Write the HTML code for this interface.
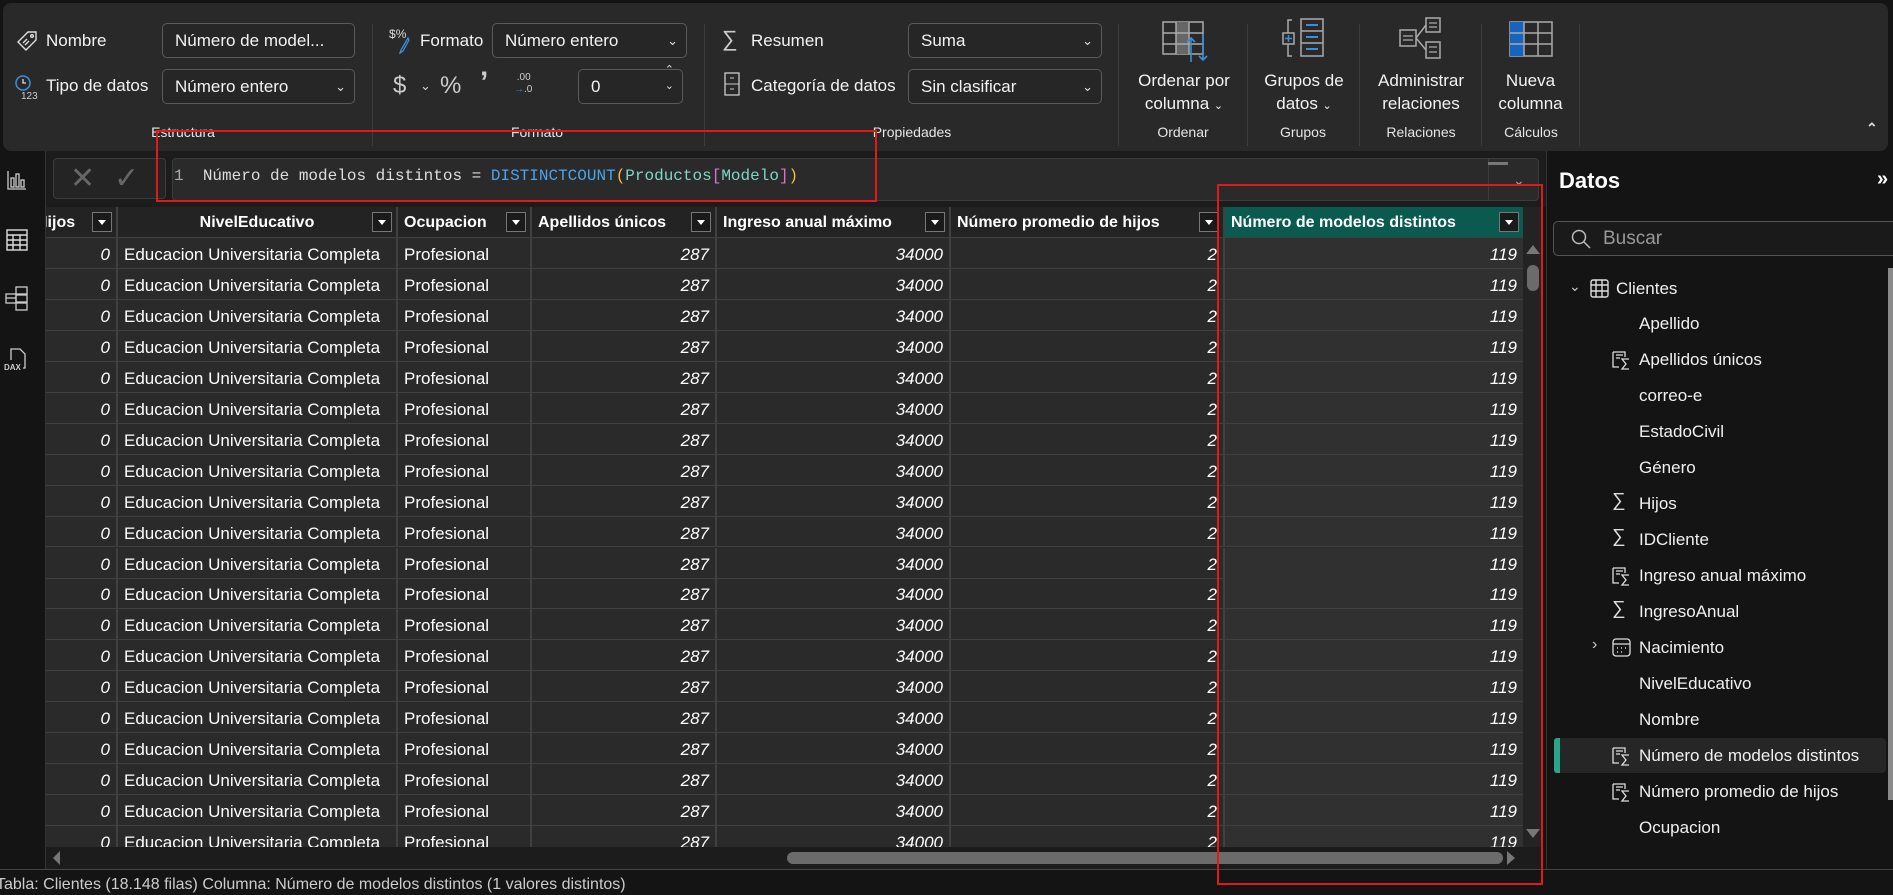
<!DOCTYPE html>
<html><head><meta charset="utf-8"><style>
*{margin:0;padding:0;box-sizing:border-box}
body{width:1893px;height:895px;background:#141414;font-family:"Liberation Sans",sans-serif;color:#fff;position:relative;overflow:hidden}
.a{position:absolute;white-space:nowrap}
.rib{position:absolute;left:3px;top:3px;width:1885px;height:148px;background:#292929;border-radius:8px}
.t17{font-size:17px;color:#f2f2f2}
.lbl{font-size:14px;color:#e6e6e6;text-align:center}
.box{position:absolute;border:1px solid #5a5a5a;border-radius:5px;background:#262626;font-size:17px;color:#f2f2f2;padding-left:12px;line-height:33px}
.chev{position:absolute;right:8px;top:0;font-size:13px;color:#ddd}
.sep{position:absolute;top:24px;width:1px;height:122px;background:#3c3c3c}
.grid{position:absolute;left:46px;top:207px;width:1477px;height:640px;overflow:hidden;background:#2a2a2a}
.row{position:absolute;left:0;height:31px;width:1477px;border-bottom:1px solid #404040}
.c{position:absolute;top:0;height:100%;border-right:2px solid #404040;font-size:17px;line-height:34px;padding:0 6px;overflow:hidden}
.r{text-align:right;font-style:italic}
.hd{background:#232323;font-weight:bold;text-align:center;line-height:31px;font-size:16px}
.dd{position:absolute;right:4px;top:5px;width:20px;height:20px;border:1px solid #777;background:#1a1a1a}
.dd:after{content:"";position:absolute;left:5px;top:7px;border-left:4px solid transparent;border-right:4px solid transparent;border-top:5px solid #fff}
.it{position:absolute;left:1639px;font-size:17px;color:#f0f0f0}
</style></head><body>

<div class="rib"></div>
<!-- Estructura -->
<svg class="a" style="left:15px;top:29px" width="24" height="24" viewBox="0 0 24 24" fill="none" stroke="#ddd" stroke-width="1.4"><path d="M3 13 L13 3 H21 V11 L11 21 Z"/><circle cx="17" cy="7" r="1.3"/><path d="M8 14l4-4M10 16l4-4"/></svg>
<div class="a t17" style="left:46px;top:31px">Nombre</div>
<svg class="a" style="left:14px;top:74px" width="28" height="26" viewBox="0 0 28 26"><circle cx="9" cy="9" r="7" fill="none" stroke="#3a8fd8" stroke-width="1.5"/><path d="M9 5v4h3" stroke="#ddd" fill="none" stroke-width="1.3"/><text x="7" y="25" font-size="10" fill="#ccc" font-family="Liberation Sans">123</text></svg>
<div class="a t17" style="left:46px;top:76px">Tipo de datos</div>
<div class="box" style="left:162px;top:23px;width:193px;height:35px">Número de model...</div>
<div class="box" style="left:162px;top:69px;width:193px;height:35px">Número entero<span class="chev">&#8964;</span></div>
<div class="a lbl" style="left:133px;top:124px;width:100px">Estructura</div>
<div class="sep" style="left:372px"></div>
<!-- Formato -->
<div class="a" style="left:389px;top:27px;font-size:12px;color:#ddd">$<span style="color:#ddd">%</span></div>
<svg class="a" style="left:398px;top:36px" width="12" height="18"><path d="M10 2L3 14l-1 3 3-2L11 4z" stroke="#3a8fd8" fill="none" stroke-width="1.3"/></svg>
<div class="a t17" style="left:420px;top:31px">Formato</div>
<div class="box" style="left:492px;top:23px;width:195px;height:35px">Número entero<span class="chev">&#8964;</span></div>
<div class="a" style="left:393px;top:72px;font-size:24px;color:#ccc">$</div>
<div class="a" style="left:420px;top:78px;font-size:13px;color:#ccc">&#8964;</div>
<div class="a" style="left:440px;top:72px;font-size:24px;color:#ccc">%</div>
<div class="a" style="left:480px;top:66px;font-size:30px;font-weight:bold;color:#ccc">&#8217;</div>
<div class="a" style="left:514px;top:72px;font-size:10px;color:#ccc;line-height:12px">&nbsp;.00<br><span style="color:#3a8fd8">&#8594;</span>.0</div>
<div class="box" style="left:578px;top:69px;width:105px;height:35px">0<span class="chev" style="top:-8px;line-height:16px;font-size:11px">&#8963;<br>&#8964;</span></div>
<div class="a lbl" style="left:487px;top:124px;width:100px">Formato</div>
<div class="sep" style="left:704px"></div>
<!-- Propiedades -->
<div class="a" style="left:722px;top:26px;font-size:22px;color:#ccc">&#8721;</div>
<div class="a t17" style="left:751px;top:31px">Resumen</div>
<svg class="a" style="left:724px;top:72px" width="16" height="24"><rect x="1" y="1" width="14" height="22" fill="none" stroke="#ccc" stroke-width="1.3"/><path d="M1 12h14M6 6h4M6 17h4" stroke="#ccc"/></svg>
<div class="a t17" style="left:751px;top:76px">Categoría de datos</div>
<div class="box" style="left:908px;top:23px;width:194px;height:35px">Suma<span class="chev">&#8964;</span></div>
<div class="box" style="left:908px;top:69px;width:194px;height:35px">Sin clasificar<span class="chev">&#8964;</span></div>
<div class="a lbl" style="left:862px;top:124px;width:100px">Propiedades</div>
<div class="sep" style="left:1118px"></div>
<!-- Ordenar -->
<svg class="a" style="left:1161px;top:20px" width="50" height="44" viewBox="0 0 50 44"><rect x="2" y="2" width="40" height="32" fill="none" stroke="#aaa" stroke-width="1.5"/><rect x="15" y="2" width="13" height="32" fill="#666"/><path d="M2 13h40M2 24h40M15 2v32M28 2v32" stroke="#aaa" stroke-width="1.5"/><path d="M30 42V18m-4 4l4-4 4 4M42 14v26m-4-4l4 4 4-4" stroke="#3a8fd8" fill="none" stroke-width="1.6"/></svg>
<div class="a t17" style="left:1120px;top:69px;width:128px;text-align:center;line-height:23px">Ordenar por<br>columna <span style="font-size:11px">&#8964;</span></div>
<div class="a lbl" style="left:1133px;top:124px;width:100px">Ordenar</div>
<div class="sep" style="left:1247px"></div>
<!-- Grupos -->
<svg class="a" style="left:1282px;top:17px" width="46" height="42" viewBox="0 0 46 42"><path d="M10 3H6v36h4" stroke="#aaa" fill="none" stroke-width="1.5"/><rect x="1" y="16" width="11" height="11" fill="#292929" stroke="#aaa" stroke-width="1.5"/><path d="M6.5 18v7M3 21.5h7" stroke="#3a8fd8" stroke-width="1.5"/><rect x="19" y="2" width="22" height="37" fill="none" stroke="#aaa" stroke-width="1.5"/><path d="M19 14h22M19 26h22" stroke="#aaa" stroke-width="1.5"/><path d="M24 8h12M24 20h12M24 32h12" stroke="#3a8fd8" stroke-width="2"/></svg>
<div class="a t17" style="left:1249px;top:69px;width:110px;text-align:center;line-height:23px">Grupos de<br>datos <span style="font-size:11px">&#8964;</span></div>
<div class="a lbl" style="left:1253px;top:124px;width:100px">Grupos</div>
<div class="sep" style="left:1359px"></div>
<!-- Relaciones -->
<svg class="a" style="left:1398px;top:16px" width="44" height="44" viewBox="0 0 44 44"><rect x="28" y="2" width="14" height="14" fill="none" stroke="#aaa" stroke-width="1.5"/><rect x="28" y="26" width="14" height="16" fill="none" stroke="#aaa" stroke-width="1.5"/><rect x="2" y="14" width="16" height="16" fill="none" stroke="#aaa" stroke-width="1.5"/><path d="M18 22l10-13M18 22l10 12" stroke="#aaa" stroke-width="1.5" fill="none"/><path d="M31 7h8M31 11h8M31 31h8M31 36h8M5 20h10M5 24h10" stroke="#aaa" stroke-width="1.3"/></svg>
<div class="a t17" style="left:1360px;top:69px;width:122px;text-align:center;line-height:23px">Administrar<br>relaciones</div>
<div class="a lbl" style="left:1371px;top:124px;width:100px">Relaciones</div>
<div class="sep" style="left:1481px"></div>
<!-- Nueva columna -->
<svg class="a" style="left:1509px;top:21px" width="44" height="36" viewBox="0 0 44 36"><rect x="1" y="1" width="42" height="34" fill="none" stroke="#aaa" stroke-width="1.5"/><rect x="1" y="1" width="14" height="34" fill="#1565c0"/><path d="M1 12h42M1 23h42M15 1v34M29 1v34" stroke="#aaa" stroke-width="1.5"/></svg>
<div class="a t17" style="left:1482px;top:69px;width:97px;text-align:center;line-height:23px">Nueva<br>columna</div>
<div class="a lbl" style="left:1481px;top:124px;width:100px">Cálculos</div>
<div class="sep" style="left:1579px"></div>
<div class="a" style="left:1866px;top:120px;font-size:14px;color:#ddd;font-weight:bold">&#8963;</div>

<!-- left sidebar -->
<div class="a" style="left:0;top:151px;width:46px;height:718px;background:#141414;border-right:1px solid #333"></div>
<svg class="a" style="left:7px;top:170px" width="20" height="20" viewBox="0 0 20 20" stroke="#ccc" fill="none" stroke-width="1.3"><path d="M1 1v18h18"/><rect x="4" y="8" width="3" height="9"/><rect x="9" y="4" width="3" height="13"/><rect x="14" y="10" width="3" height="7"/></svg>
<svg class="a" style="left:6px;top:229px" width="22" height="22" viewBox="0 0 22 22" stroke="#ddd" fill="none" stroke-width="1.4"><rect x="1" y="1" width="20" height="20"/><path d="M1 6h20M1 11h20M1 16h20M7 6v15M14 6v15"/></svg>
<svg class="a" style="left:5px;top:286px" width="26" height="26" viewBox="0 0 26 26" stroke="#ccc" fill="none" stroke-width="1.3"><rect x="11" y="1" width="11" height="7"/><rect x="11" y="9" width="11" height="7"/><rect x="11" y="17" width="11" height="7"/><rect x="1" y="8" width="10" height="9"/><path d="M1 12h10"/></svg>
<svg class="a" style="left:4px;top:346px" width="28" height="28" viewBox="0 0 28 28"><path d="M7 14V3h9l5 5v14h-2" stroke="#ccc" fill="none" stroke-width="1.3"/><text x="0" y="24" font-size="8" font-weight="bold" fill="#ccc" font-family="Liberation Sans">DAX</text></svg>

<!-- formula bar -->
<div class="a" style="left:46px;top:151px;width:1500px;height:56px;background:#1c1c1c"></div>
<div class="a" style="left:53px;top:158px;width:113px;height:41px;border:1px solid #3c3c3c;border-radius:4px;background:#242424"></div>
<div class="a" style="left:70px;top:161px;font-size:30px;color:#666;font-weight:100">&#10005;</div>
<div class="a" style="left:114px;top:161px;font-size:30px;color:#666">&#10003;</div>
<div class="a" style="left:172px;top:158px;width:1367px;height:43px;border:1px solid #3c3c3c;border-radius:4px;background:#2a2a2a"></div>
<div class="a" style="left:1488px;top:159px;width:1px;height:41px;background:#3c3c3c"></div>
<div class="a" style="left:1488px;top:162px;width:20px;height:3px;background:#777"></div>
<div class="a" style="left:1513px;top:172px;font-size:14px;color:#aaa">&#8964;</div>
<div class="a" style="left:174px;top:167px;font-family:'Liberation Mono',monospace;font-size:16px;color:#ddd"><span style="color:#aaa">1</span>&nbsp; Número de modelos distintos = <span style="color:#4aa3f0">DISTINCTCOUNT</span><span style="color:#f0c040">(</span><span style="color:#7fd6c8">Productos</span><span style="color:#d76fd1">[</span><span style="color:#7fd6c8">Modelo</span><span style="color:#d76fd1">]</span><span style="color:#f0c040">)</span></div>

<!-- grid -->
<div class="grid">
 <div class="row" style="top:0;background:#232323;height:31px">
  <div class="c hd" style="left:-10px;width:82px;text-align:left;padding-left:0">Hijos<span class="dd"></span></div>
  <div class="c hd" style="left:72px;width:280px">NivelEducativo<span class="dd"></span></div>
  <div class="c hd" style="left:352px;width:134px;text-align:left">Ocupacion<span class="dd"></span></div>
  <div class="c hd" style="left:486px;width:185px;text-align:left">Apellidos únicos<span class="dd"></span></div>
  <div class="c hd" style="left:671px;width:234px;text-align:left">Ingreso anual máximo<span class="dd"></span></div>
  <div class="c hd" style="left:905px;width:274px;text-align:left">Número promedio de hijos<span class="dd"></span></div>
  <div class="c hd" style="left:1179px;width:298px;text-align:left;background:#0b5a4f;border-right:none">Número de modelos distintos<span class="dd"></span></div>
 </div>
</div>
<div class="a" style="left:1523px;top:207px;width:20px;height:640px;background:#232323"></div>
<div class="a" style="left:1526px;top:245px;border-left:7px solid transparent;border-right:7px solid transparent;border-bottom:9px solid #777"></div>
<div class="a" style="left:1527px;top:265px;width:12px;height:26px;border-radius:6px;background:#6b6b6b"></div>
<div class="a" style="left:1526px;top:829px;border-left:7px solid transparent;border-right:7px solid transparent;border-top:9px solid #777"></div>
<!-- hscroll -->
<div class="a" style="left:46px;top:847px;width:1497px;height:22px;background:#1c1c1c"></div>
<div class="a" style="left:53px;top:851px;border-top:7px solid transparent;border-bottom:7px solid transparent;border-right:7px solid #777"></div>
<div class="a" style="left:1507px;top:851px;border-top:7px solid transparent;border-bottom:7px solid transparent;border-left:8px solid #777"></div>
<div class="a" style="left:787px;top:852px;width:716px;height:12px;border-radius:6px;background:#6b6b6b"></div>

<!-- status -->
<div class="a" style="left:0;top:869px;width:1893px;height:1px;background:#444"></div>
<div class="a" style="left:-4px;top:876px;font-size:16px;color:#ccc">Tabla: Clientes (18.148 filas) Columna: Número de modelos distintos (1 valores distintos)</div>

<!-- red boxes -->
<div class="a" style="left:156px;top:130px;width:721px;height:72px;border:2px solid #e01a1a"></div>
<div class="a" style="left:1217px;top:184px;width:326px;height:701px;border:2px solid #e01a1a"></div>

<!-- right panel -->
<div class="a" style="left:1546px;top:151px;width:1px;height:718px;background:#333"></div>
<div class="a" style="left:1559px;top:168px;font-size:22px;font-weight:bold;color:#fff">Datos</div>
<div class="a" style="left:1877px;top:168px;font-size:20px;color:#fff;font-weight:bold">&#187;</div>
<div class="a" style="left:1553px;top:221px;width:350px;height:35px;border:1px solid #555;border-radius:5px;background:#1a1a1a"></div>
<svg class="a" style="left:1570px;top:228px" width="22" height="22" viewBox="0 0 22 22" stroke="#bbb" fill="none" stroke-width="1.5"><circle cx="9" cy="9" r="6.5"/><path d="M14 14l6 6"/></svg>
<div class="a" style="left:1603px;top:228px;font-size:19px;color:#999">Buscar</div>
<div class="a" style="left:1888px;top:268px;width:5px;height:532px;background:#8a8a8a"></div>
<div class="a" style="left:1569px;top:278px;font-size:14px;color:#ccc">&#8964;</div>
<svg class="a" style="left:1590px;top:279px" width="19" height="19" viewBox="0 0 19 19" stroke="#ddd" fill="none" stroke-width="1.4"><rect x="1" y="1" width="17" height="17" rx="2"/><path d="M1 6h17M1 12h17M6 1v17M12 1v17"/></svg>
<div class="a" style="left:1616px;top:279px;font-size:17px;color:#f0f0f0">Clientes</div>
<div class="a" style="left:1554px;top:738px;width:332px;height:35px;border-radius:4px;background:#262626"></div>
<div class="a" style="left:1554px;top:738px;width:6px;height:35px;border-radius:3px 0 0 3px;background:#2aa58a"></div>
<div class="it" style="top:314px">Apellido</div>
<div class="it" style="top:350px">Apellidos únicos</div>
<div class="it" style="top:386px">correo-e</div>
<div class="it" style="top:422px">EstadoCivil</div>
<div class="it" style="top:458px">Género</div>
<div class="it" style="top:494px">Hijos</div>
<div class="it" style="top:530px">IDCliente</div>
<div class="it" style="top:566px">Ingreso anual máximo</div>
<div class="it" style="top:602px">IngresoAnual</div>
<div class="it" style="top:638px">Nacimiento</div>
<div class="it" style="top:674px">NivelEducativo</div>
<div class="it" style="top:710px">Nombre</div>
<div class="it" style="top:746px">Número de modelos distintos</div>
<div class="it" style="top:782px">Número promedio de hijos</div>
<div class="it" style="top:818px">Ocupacion</div>
<!-- field icons -->
<svg width="0" height="0" style="position:absolute"><defs><g id="m" stroke="#ddd" fill="none" stroke-width="1.3"><path d="M2 2h12v5M2 2v15h6"/><path d="M5 5h7M5 8h4"/><path d="M18 9h-7l4 5-4 5h7"/></g></defs></svg>
<svg class="a" style="left:1611px;top:350px" width="22" height="22"><use href="#m"/></svg>
<svg class="a" style="left:1611px;top:566px" width="22" height="22"><use href="#m"/></svg>
<svg class="a" style="left:1611px;top:746px" width="22" height="22"><use href="#m"/></svg>
<svg class="a" style="left:1611px;top:782px" width="22" height="22"><use href="#m"/></svg>
<div class="a" style="left:1612px;top:490px;font-size:19px;color:#ddd">&#8721;</div>
<div class="a" style="left:1612px;top:526px;font-size:19px;color:#ddd">&#8721;</div>
<div class="a" style="left:1612px;top:598px;font-size:19px;color:#ddd">&#8721;</div>
<div class="a" style="left:1592px;top:636px;font-size:16px;color:#ccc">&#8250;</div>
<svg class="a" style="left:1612px;top:638px" width="19" height="19" viewBox="0 0 19 19" stroke="#ddd" fill="none" stroke-width="1.3"><rect x="1" y="1" width="17" height="17" rx="3"/><path d="M1 6h17"/><path d="M5 10h1M9 10h1M13 10h1M5 14h1M9 14h1" stroke-width="1.6"/></svg>

<script>
(function(){
 var g=document.querySelector('.grid'),h='';
 var tops=[31,62,93,124,155,186,217,248,279,310,341,371,402,433,464,495,526,557,588,619];
 for(var i=0;i<tops.length;i++){
  var t=tops[i],ht=(i==9)?30:31;
  h+='<div class="row" style="top:'+t+'px;height:'+ht+'px">'+
  '<div class="c r" style="left:-10px;width:82px">0</div>'+
  '<div class="c" style="left:72px;width:280px">Educacion Universitaria Completa</div>'+
  '<div class="c" style="left:352px;width:134px">Profesional</div>'+
  '<div class="c r" style="left:486px;width:185px">287</div>'+
  '<div class="c r" style="left:671px;width:234px">34000</div>'+
  '<div class="c r" style="left:905px;width:274px">2</div>'+
  '<div class="c r" style="left:1179px;width:298px;background:#303030;border-right:none">119</div></div>';
 }
 g.insertAdjacentHTML('beforeend',h);
})();
</script>
</body></html>
